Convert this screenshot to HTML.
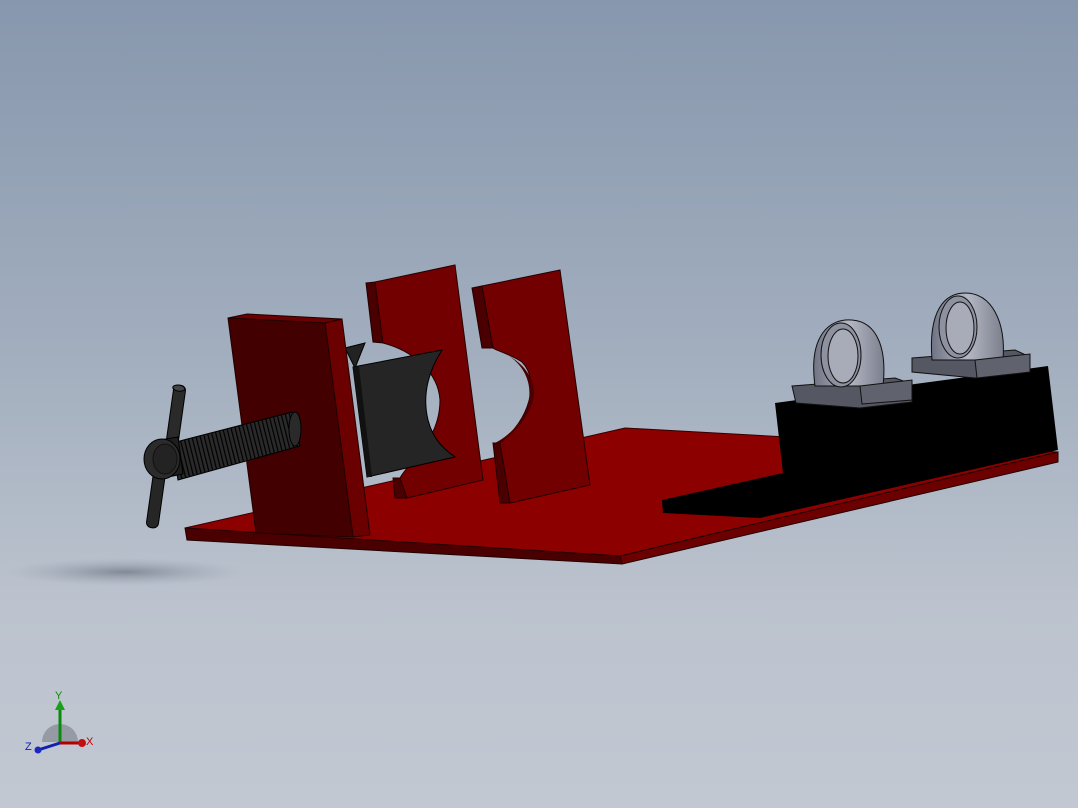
<!DOCTYPE html>
<html><head><style>
html,body{margin:0;padding:0;}
body{width:1078px;height:808px;overflow:hidden;background:linear-gradient(#8797ad 0%,#a3afbf 45%,#bcc3ce 75%,#c2c8d2 100%);}
svg{position:absolute;left:0;top:0;}
</style></head><body>
<svg width="1078" height="808" viewBox="0 0 1078 808" xmlns="http://www.w3.org/2000/svg">
<defs>
<radialGradient id="sh" cx="0.5" cy="0.5" r="0.5"><stop offset="0" stop-color="#4a5260" stop-opacity="0.5"/><stop offset="1" stop-color="#8a94a4" stop-opacity="0"/></radialGradient>
<pattern id="th" width="4" height="60" patternUnits="userSpaceOnUse" patternTransform="rotate(-14)"><rect width="4" height="60" fill="#2a2a2a"/><rect width="1.2" height="60" fill="#000"/></pattern>
<linearGradient id="gr" x1="0" y1="0" x2="1" y2="0"><stop offset="0" stop-color="#6e7282"/><stop offset="0.5" stop-color="#b4b7c4"/><stop offset="1" stop-color="#7c808e"/></linearGradient>
</defs>
<ellipse cx="125" cy="572" rx="120" ry="14" fill="url(#sh)"/>
<!-- base plate -->
<polygon points="185,528 625,428 1058,452 620,556" fill="#8c0000" stroke="#300" stroke-width="1"/>
<polygon points="185,528 620,556 622,564 187,540" fill="#4a0000" stroke="#200" stroke-width="1"/>
<polygon points="620,556 1058,452 1058,462 622,564" fill="#6c0000" stroke="#200" stroke-width="1"/>
<!-- black block -->
<polygon points="775,403 1048,366 1058,450 760,518 663,513 662,500 783,473" fill="#000"/>
<!-- pillow block 1 -->
<g stroke="#111" stroke-width="1">
<polygon points="792,386 895,378 912,384 912,402 860,408 796,403" fill="#555862"/>
<path d="M815,386 C808,335 830,318 852,320 C878,322 887,350 883,386 Z" fill="url(#gr)"/>
<ellipse cx="841" cy="355" rx="20" ry="32" fill="#8e92a0"/>
<ellipse cx="843" cy="356" rx="15" ry="27" fill="#a8abb8"/>
<polygon points="860,386 912,380 912,400 862,404" fill="#60636e"/>
</g>
<!-- pillow block 2 -->
<g stroke="#111" stroke-width="1">
<polygon points="912,358 1015,350 1030,357 1030,372 975,378 912,372" fill="#555862"/>
<path d="M932,360 C928,310 945,293 965,293 C992,293 1006,322 1003,360 Z" fill="url(#gr)"/>
<ellipse cx="958" cy="327" rx="19" ry="31" fill="#8e92a0"/>
<ellipse cx="960" cy="328" rx="14" ry="26" fill="#a8abb8"/>
<polygon points="975,360 1030,354 1030,372 977,378" fill="#60636e"/>
</g>
<!-- middle plate 2 -->
<polygon points="472,288 482,286 493,348 482,348" fill="#4a0000" stroke="#200"/>
<polygon points="493,443 500,443 510,503 500,503" fill="#4a0000" stroke="#200"/>
<path d="M482,286 L560,270 L590,485 L510,503 L500,443 C530,420 540,380 522,362 C510,354 495,350 493,348 Z" fill="#730000" stroke="#200"/>
<path d="M493,348 C515,355 535,375 528,405 C522,425 505,438 495,443 L500,443 C520,430 538,405 533,385 C528,365 510,355 493,348Z" fill="#4a0000"/>
<!-- middle plate 1 -->
<polygon points="366,283 375,282 383,343 373,342" fill="#4a0000" stroke="#200"/>
<polygon points="393,478 400,478 407,498 395,498" fill="#4a0000" stroke="#200"/>
<path d="M375,282 L455,265 L483,480 L407,498 L400,478 C410,460 440,440 440,400 C438,370 410,350 383,343 Z" fill="#730000" stroke="#200"/>
<!-- black jaw -->
<polygon points="345,348 365,343 355,368" fill="#222" stroke="#000"/>
<path d="M353,367 L442,350 C428,372 422,395 428,420 C433,440 445,450 455,457 L367,477 Z" fill="#252525" stroke="#000"/>
<polygon points="353,367 359,367 372,477 367,477" fill="#111"/>
<!-- left jaw block -->
<polygon points="228,318 247,314 342,319 325,323" fill="#6a0000" stroke="#200"/>
<polygon points="325,323 342,319 370,535 353,537" fill="#6a0000" stroke="#200"/>
<polygon points="228,318 325,323 353,537 256,533" fill="#420000" stroke="#200"/>
<!-- screw -->
<polygon points="172,443 292,412 300,446 178,480" fill="url(#th)" stroke="#000"/>
<ellipse cx="295" cy="429" rx="6" ry="17" fill="#2a2a2a" stroke="#000"/>
<rect x="170" y="385" width="12" height="60" rx="5" fill="#2a2a2a" stroke="#000" transform="rotate(8 176 415)"/>
<ellipse cx="175" cy="388" rx="6" ry="3" fill="#444" stroke="#000" transform="rotate(8 176 415)"/>
<rect x="150" y="470" width="12" height="58" rx="5" fill="#262626" stroke="#000" transform="rotate(8 156 498)"/>
<path d="M160,440 L178,437 L183,474 L163,478 Z" fill="#1e1e1e" stroke="#000"/>
<ellipse cx="162" cy="459" rx="18" ry="20" fill="#2b2b2b" stroke="#000"/>
<ellipse cx="165" cy="459" rx="12" ry="15" fill="#232323" stroke="#111"/>
<!-- triad -->
<g font-family="Liberation Sans,sans-serif" font-size="11">
<path d="M42,742 A18,18 0 0 1 78,742 Z" fill="#8a8e98" opacity="0.8"/>
<line x1="60" y1="743" x2="60" y2="706" stroke="#0a8a0a" stroke-width="3"/>
<polygon points="55,710 65,710 60,700" fill="#1aa01a"/>
<text x="55" y="699" fill="#0a8a0a">Y</text>
<line x1="60" y1="743" x2="82" y2="743" stroke="#b00000" stroke-width="3"/>
<circle cx="82" cy="743" r="4" fill="#c01010"/>
<text x="86" y="745" fill="#c00000">X</text>
<line x1="60" y1="743" x2="38" y2="750" stroke="#1020b0" stroke-width="3"/>
<circle cx="38" cy="750" r="3.5" fill="#1a28c0"/>
<text x="25" y="750" fill="#1020b0">Z</text>
</g>
</svg>
</body></html>
